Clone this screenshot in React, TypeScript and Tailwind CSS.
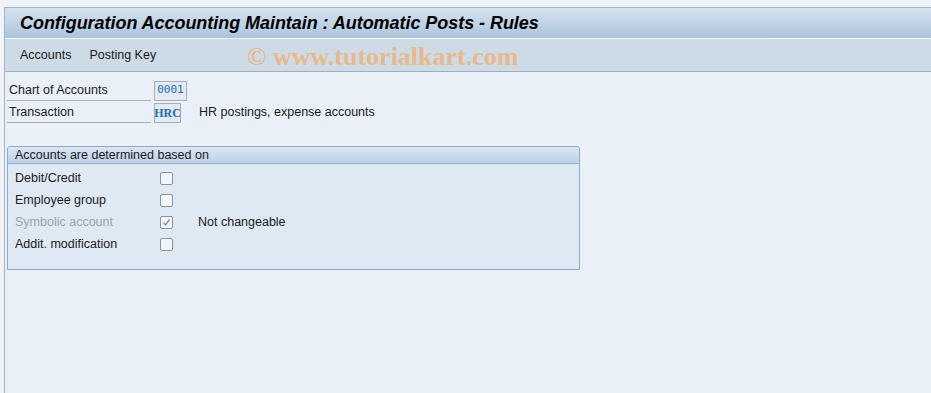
import React from "react";

const font = { fontFamily: "Tahoma, 'Liberation Sans', Arial, sans-serif" };

function Check({ checked = false }: { checked?: boolean }) {
  return (
    <div className="w-[13px] h-[13px] border border-[#8a949e] bg-[#f3f6f9] rounded-[2px] flex items-center justify-center">
      {checked && (
        <svg width="9" height="9" viewBox="0 0 9 9">
          <path d="M1.5 4.5 L3.5 7 L7.5 1.5" fill="none" stroke="#8a9097" strokeWidth="1.3" />
        </svg>
      )}
    </div>
  );
}

export default function App() {
  return (
    <div className="w-[931px] h-[393px] bg-[#f0f4f9] pt-[7px] overflow-hidden" style={font}>
      <div className="ml-[4px] h-[386px] border-l border-t border-[#a7b3c0] bg-[#e9f0f8] flex flex-col">
        <div className="h-[30px] bg-gradient-to-b from-[#d6e3f0] to-[#acc4db] flex items-center pl-[15px]">
          <span className="text-[18px] font-bold italic text-black tracking-[-0.05px]" style={{ fontFamily: "'Liberation Sans', Arial, sans-serif" }}>
            Configuration Accounting Maintain : Automatic Posts - Rules
          </span>
        </div>
        <div className="h-[1px] bg-[#f4f8fc]" />
        <div className="h-[33px] bg-[#cddbe7] border-b border-[#a3adb8] flex items-center pl-[15px] relative text-[12.5px] text-[#1a1a1a]">
          <span>Accounts</span>
          <span className="ml-[18px]">Posting Key</span>
          <span
            className="absolute left-[242px] top-[-2px] text-[26px] font-bold text-[#e9b98a]"
            style={{ fontFamily: "'Liberation Serif', 'Times New Roman', serif" }}
          >
            © www.tutorialkart.com
          </span>
        </div>
        <div className="pt-[8px] pl-[2px] text-[12.5px] text-[#1a1a1a]">
          <div className="flex items-center h-[21px]">
            <div className="w-[144px] h-[20px] border-b border-[#a6aeb8] pl-[2px] flex items-center">Chart of Accounts</div>
            <div className="ml-[3px] w-[33px] h-[20px] border border-[#a8aeb4] bg-[#e2ebf4] flex items-center justify-center text-[#2a6ab8] text-[11px]" style={{ fontFamily: "'DejaVu Sans Mono', monospace" }}>0001</div>
          </div>
          <div className="flex items-center h-[21px] mt-[1px]">
            <div className="w-[144px] h-[20px] border-b border-[#a6aeb8] pl-[2px] flex items-center">Transaction</div>
            <div className="ml-[3px] w-[27px] h-[20px] border border-[#a8aeb4] bg-[#e2ebf4] flex items-center justify-center text-[#2a6ab8] text-[12px] font-bold" style={{ fontFamily: "'Liberation Serif', serif" }}>HRC</div>
            <span className="ml-[18px]">HR postings, expense accounts</span>
          </div>
          <div className="mt-[23px] w-[573px] h-[124px] border border-[#93abc6] rounded-t-[3px] bg-[#dfe9f4] flex flex-col">
            <div className="h-[17px] bg-gradient-to-b from-[#dae6f3] to-[#bcd1e7] border-b border-[#9bb2cb] flex items-center pl-[7px] rounded-t-[3px]">
              Accounts are determined based on
            </div>
            <div className="pt-[3px]">
              {[
                { l: "Debit/Credit" },
                { l: "Employee group" },
                { l: "Symbolic account", dis: true, c: true, t: "Not changeable" },
                { l: "Addit. modification" },
              ].map((r) => (
                <div key={r.l} className="flex items-center h-[22px]">
                  <span className={`w-[152px] pl-[7px] ${r.dis ? "text-[#9aa3ad]" : ""}`}>{r.l}</span>
                  <Check checked={r.c} />
                  {r.t && <span className="ml-[25px]">{r.t}</span>}
                </div>
              ))}
            </div>
          </div>
        </div>
      </div>
    </div>
  );
}
